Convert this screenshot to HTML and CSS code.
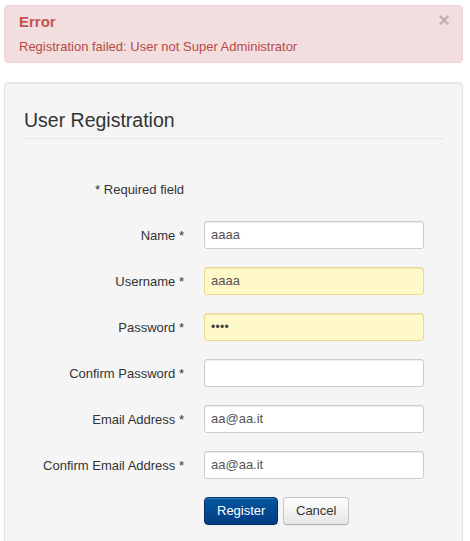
FILE: index.html
```html
<!DOCTYPE html>
<html>
<head>
<meta charset="utf-8">
<link rel="stylesheet" href="styles.css">
</head>
<body>
<div class="page">
  <div class="alert">
    <span class="close">&times;</span>
    <h4 class="alert-heading">Error</h4>
    <div class="alert-message">Registration failed: User not Super Administrator</div>
  </div>
  <div class="well">
    <div class="legend">User Registration</div>
    <form class="form">
      <div class="row">
        <div class="label">* Required field</div>
      </div>
      <div class="row">
        <div class="label">Name *</div>
        <div class="control"><div class="input">aaaa</div></div>
      </div>
      <div class="row">
        <div class="label">Username *</div>
        <div class="control"><div class="input autofill">aaaa</div></div>
      </div>
      <div class="row">
        <div class="label">Password *</div>
        <div class="control"><div class="input autofill dots">&bull;&bull;&bull;&bull;</div></div>
      </div>
      <div class="row">
        <div class="label">Confirm Password *</div>
        <div class="control"><div class="input"></div></div>
      </div>
      <div class="row">
        <div class="label">Email Address *</div>
        <div class="control"><div class="input">aa@aa.it</div></div>
      </div>
      <div class="row">
        <div class="label">Confirm Email Address *</div>
        <div class="control"><div class="input">aa@aa.it</div></div>
      </div>
      <div class="row">
        <div class="label"></div>
        <div class="control buttons">
          <span class="btn btn-primary">Register</span>
          <span class="btn">Cancel</span>
        </div>
      </div>
    </form>
  </div>
</div>
</body>
</html>
```

FILE: styles.css
```css
html, body {
  margin: 0;
  padding: 0;
  background: #fff;
}
body {
  font-family: "Liberation Sans", Arial, sans-serif;
  font-size: 13px;
  color: #333;
  overflow: hidden;
}
.page {
  padding: 5px 7px 0 4px;
}
.alert {
  position: relative;
  height: 58px;
  box-sizing: border-box;
  background: #f2dede;
  border: 1px solid #eed3d7;
  border-radius: 4px;
  color: #b94a48;
  padding: 6px 35px 0 14px;
}
.alert-heading {
  margin: 0;
  font-size: 15px;
  font-weight: bold;
  line-height: 20px;
  color: #c25450;
}
.alert-message {
  margin-top: 5px;
  line-height: 20px;
  font-size: 13px;
}
.close {
  position: absolute;
  right: 12px;
  top: 4px;
  font-size: 20px;
  font-weight: bold;
  line-height: 20px;
  color: #000;
  opacity: 0.2;
}
.well {
  margin-top: 19px;
  background: #f5f5f5;
  border: 1px solid #e3e3e3;
  border-radius: 4px;
  padding: 19px 18px 19px 19px;
  box-shadow: inset 0 1px 1px rgba(0,0,0,0.05);
}
.legend {
  font-size: 19.5px;
  line-height: 36px;
  color: #333;
  border-bottom: 1px solid #e5e5e5;
}
.form {
  margin-top: 36px;
  display: flex;
  flex-direction: column;
  gap: 18px;
}
.row {
  display: flex;
  align-items: center;
  height: 28px;
}
.label {
  width: 160px;
  flex: none;
  text-align: right;
  line-height: 20px;
  padding-top: 2px;
}
.control {
  margin-left: 20px;
}
.input {
  box-sizing: border-box;
  width: 220px;
  height: 28px;
  padding: 0 6px;
  line-height: 26px;
  font-size: 13px;
  color: #555;
  background: #fff;
  border: 1px solid #ccc;
  border-radius: 3px;
  box-shadow: inset 0 1px 1px rgba(0,0,0,0.075);
}
.input.autofill {
  background: #fff9c9;
  border-color: #ecd88e;
}
.input.dots {
  font-size: 12px;
  letter-spacing: 0.3px;
  color: #444;
}
.buttons {
  display: flex;
  gap: 5px;
}
.btn {
  display: inline-block;
  box-sizing: border-box;
  height: 28px;
  line-height: 26px;
  padding: 0 12px;
  font-size: 13px;
  color: #333;
  border: 1px solid #c5c5c5;
  border-bottom-color: #b3b3b3;
  border-radius: 4px;
  background: linear-gradient(#ffffff, #e6e6e6);
  box-shadow: inset 0 1px 0 rgba(255,255,255,0.2), 0 1px 2px rgba(0,0,0,0.05);
}
.btn-primary {
  color: #fff;
  background: linear-gradient(#05579f, #023d85);
  border-color: #022f68;
  padding: 0 12px;
  width: 74px;
  text-align: center;
}
```
